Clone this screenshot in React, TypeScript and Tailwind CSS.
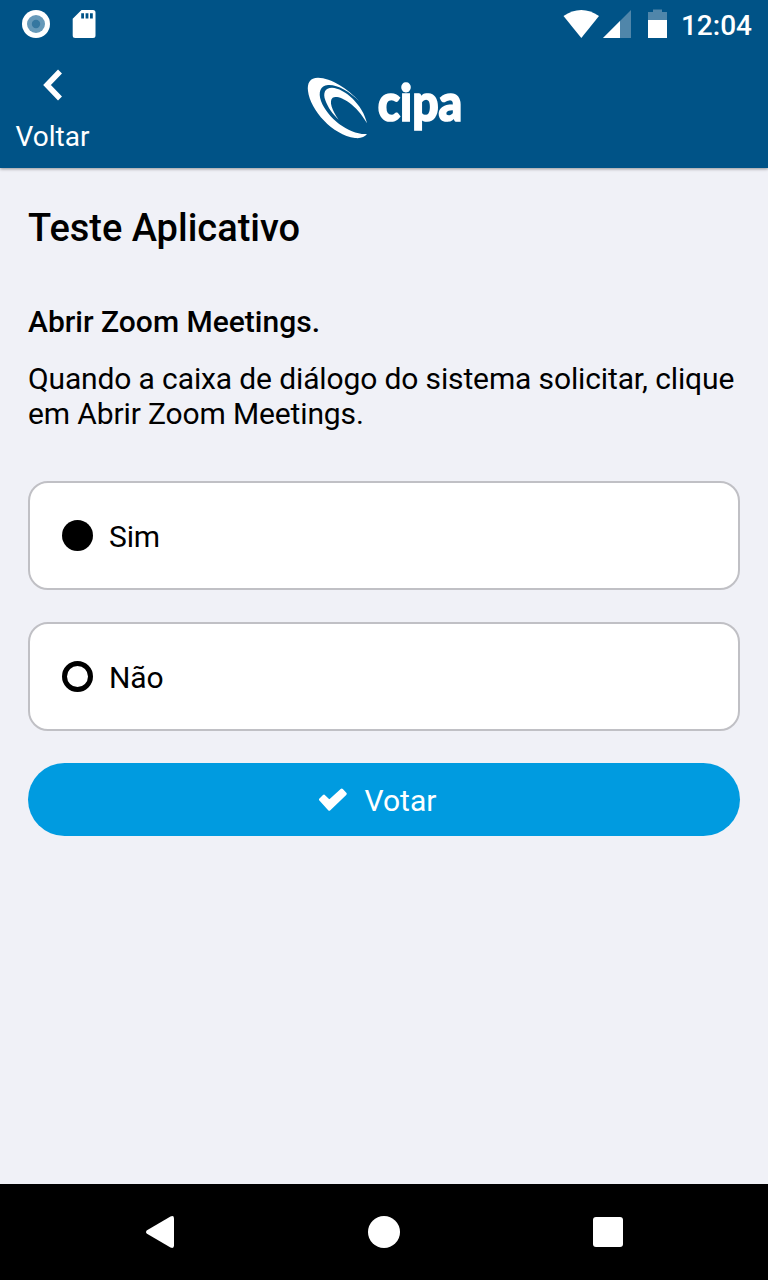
import React from "react";

function StatusBar() {
  return (
    <div className="flex h-12 items-center justify-between pr-4 pl-[22px] text-white">
      <div className="flex items-center gap-[22px]">
        <svg width="28" height="28" viewBox="0 0 28 28">
          <circle cx="14" cy="14" r="14" fill="#fff" />
          <circle cx="14" cy="14" r="9" fill="#6699b9" />
          <circle cx="14" cy="14" r="4.2" fill="#3577a0" />
        </svg>
        <svg width="24" height="30" viewBox="0 0 24 30">
          <path
            fill="#fff"
            fillRule="evenodd"
            d="M9.5 1H21a2.5 2.5 0 0 1 2.5 2.5v23a2.5 2.5 0 0 1-2.5 2.5H3.200a2.500 2.500 0 0 1-2.500-2.500V9.800zM9.200 4.200v5.200h2.800V4.200zm4.400 0v5.200h2.800V4.200zm4.400 0v5.200h2.800V4.200z"
          />
        </svg>
      </div>
      <div className="flex items-center">
        <svg width="104" height="30" viewBox="0 0 104 30">
          <path fill="#fff" d="M.5 7Q9 1 18.300 1T36 7L18.300 29z" />
          <path fill="#5086aa" d="M68 1v28H40z" />
          <path fill="#fff" d="M57 12v17H40z" />
          <path fill="#5086aa" d="M85 3h5V.500h9V3h5v9H85z" />
          <path fill="#fff" d="M85 11h19v18H85z" />
        </svg>
        <span className="ml-[14px] pt-[2px] text-[28px] leading-[33px] font-medium">12:04</span>
      </div>
    </div>
  );
}

function Logo() {
  return (
    <svg width="180" height="103" viewBox="0 0 540 309" fill="#fff">
      <path d="M193 109C160 72 108 38 69 38C45 38 36 54 39 78C46 136 113 210 180 219C197 221 209 216 216 207C165 211 98 161 78 108C69 82 76 62 99 60C126 58 162 78 193 109Z" />
      <path d="M216 175C205 120 148 69 111 68C90 68 83 84 91 106C98 126 113 148 131 164C111 136 101 108 113 98C127 88 179 109 216 175Z" />
      <text
        x="248"
        y="168"
        textLength="254"
        lengthAdjust="spacingAndGlyphs"
        stroke="#fff"
        strokeWidth="5"
        className="font-[Lato] text-[154px] font-black"
      >
        cipa
      </text>
    </svg>
  );
}

function Header() {
  return (
    <header className="relative z-10 h-[168px] bg-[#005387] shadow-[0_1px_3px_rgba(0,0,0,0.4)]">
      <StatusBar />
      <div className="grid grid-cols-[295px_180px_1fr] text-white">
        <button className="flex w-[105px] flex-col items-center pt-[21px]">
          <svg width="20" height="32" viewBox="0 0 20 32" fill="none" stroke="#fff" strokeWidth="5.5">
            <path d="M17 2.500 4 16l13 13.500" />
          </svg>
          <span className="mt-[19px] text-[28px] leading-[33px]">Voltar</span>
        </button>
        <div className="pt-[17px]">
          <Logo />
        </div>
      </div>
    </header>
  );
}

function Option({ label, selected }: { label: string; selected?: boolean }) {
  return (
    <label className="flex h-[109px] items-center gap-4 rounded-[20px] border-2 border-[#c0c0c5] bg-white pl-8">
      <span
        className={
          selected
            ? "size-[31px] rounded-full bg-black"
            : "size-[31px] rounded-full border-[5px] border-black"
        }
      />
      <span className="pt-[2px] text-[30px] leading-[35px] tracking-[-0.15px]">{label}</span>
    </label>
  );
}

function NavigationBar() {
  return (
    <nav className="grid h-24 grid-cols-3 items-center justify-items-center bg-black px-12">
      <svg width="28" height="32" viewBox="0 0 28 32">
        <path
          fill="#fff"
          d="M1 14.200 24.500.500Q28-1 28 2.500V29.500Q28 33 24.500 31.500L1 17.800Q-1 16 1 14.200Z"
        />
      </svg>
      <svg width="32" height="32" viewBox="0 0 32 32">
        <circle cx="16" cy="16" r="16" fill="#fff" />
      </svg>
      <span className="size-[30px] rounded-[3px] bg-white" />
    </nav>
  );
}

export default function App() {
  return (
    <div className="flex h-[1280px] w-[768px] flex-col bg-[#f0f1f7] font-[Roboto,sans-serif] text-black">
      <Header />
      <main className="flex flex-1 flex-col px-7">
        <h1 className="mt-[38px] text-[38px] leading-[45px] font-medium">Teste Aplicativo</h1>
        <h2 className="mt-[53px] text-[30px] leading-[35px] font-medium">Abrir Zoom Meetings.</h2>
        <p className="mt-[22px] text-[30px] leading-[35px] tracking-[-0.13px] whitespace-nowrap">
          Quando a caixa de diálogo do sistema solicitar, clique
          <br />
          em Abrir Zoom Meetings.
        </p>
        <div className="mt-[50px] flex flex-col gap-8">
          <Option label="Sim" selected />
          <Option label="Não" />
        </div>
        <button className="mt-8 flex h-[73px] items-center justify-center rounded-full bg-[#009be0] pr-[13px] text-white">
          <svg width="30" height="24" viewBox="0 0 30 24">
            <path
              d="M1.500 11.500 5 8.200 10.300 13.400 22.700 2 26.200 5.800 10.300 21.200z"
              fill="#fff"
              stroke="#fff"
              strokeWidth="3"
              strokeLinejoin="round"
            />
          </svg>
          <span className="ml-4 pt-[2px] text-[30px] leading-[35px]">Votar</span>
        </button>
      </main>
      <NavigationBar />
    </div>
  );
}
